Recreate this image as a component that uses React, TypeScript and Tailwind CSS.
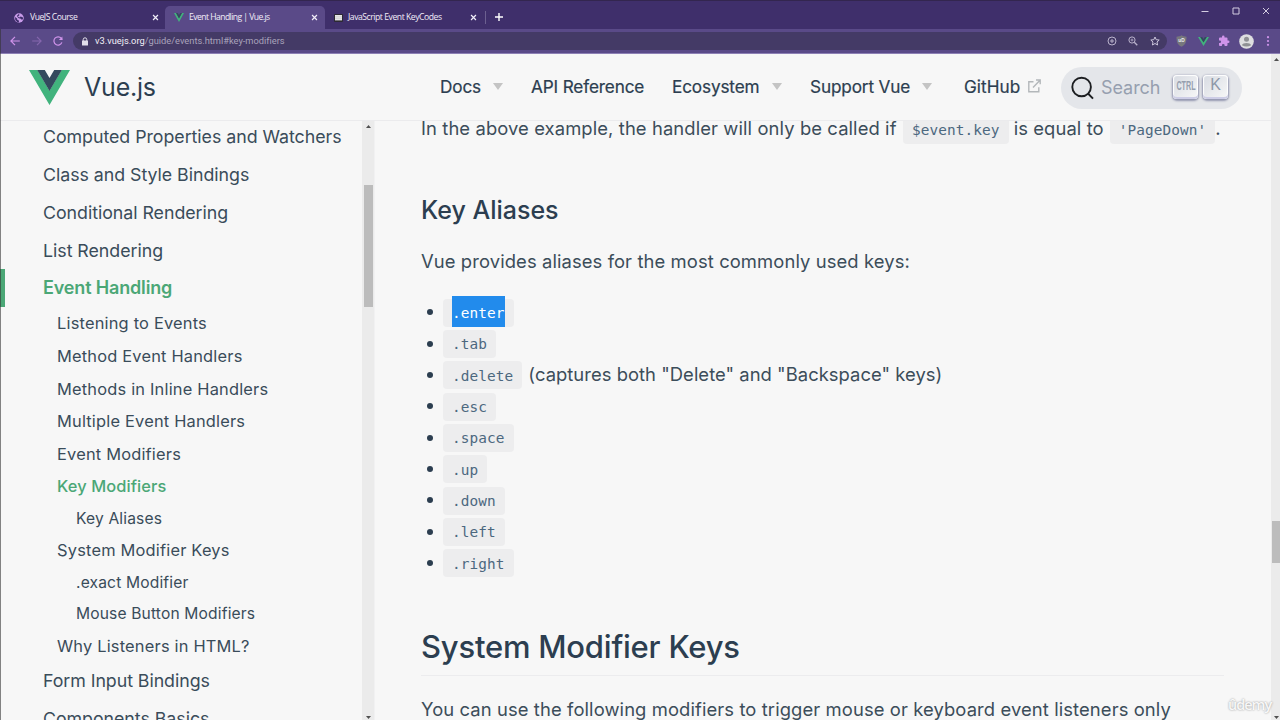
import React from "react";

const VueLogo = ({ className }: { className: string }) => (
  <svg viewBox="0 0 41 35" className={className} preserveAspectRatio="none">
    <path d="M0 0 L20.5 35 L41 0 H32.6 L20.5 20.8 L8.4 0 Z" fill="#41b37d" />
    <path d="M8.2 0 L20.5 21 L32.8 0 H25.2 L20.5 8 L15.8 0 Z" fill="#34495e" />
  </svg>
);

const Cross = () => (
  <svg viewBox="0 0 8 8" className="size-[7px]">
    <path d="M1.2 1.2 6.8 6.8 M6.8 1.2 1.2 6.8" stroke="#f1edf8" strokeWidth="1.4" />
  </svg>
);

const Globe = () => (
  <svg viewBox="0 0 16 16" className="size-[10px]">
    <circle cx="8" cy="8" r="7.6" fill="#c99bea" />
    <path d="M1.6 6.4 5 8.6l.2 2.2 2.6 1 .2 3.2-3-.8L2 11Z M8 1.2 8.6 3.6 6.2 5.4 8.4 7l2.4-1.6 3.6 1.8v2L12.8 11 11 9.2 7.6 8.2 5.6 6.2 4.8 4.4Z" fill="#3f2f6b" />
  </svg>
);

const NavItem = ({ label, arrow, className }: { label: string; arrow?: boolean; className: string }) => (
  <div className={`flex shrink-0 items-center whitespace-nowrap ${className}`}>
    <span>{label}</span>
    {arrow && (
      <svg viewBox="0 0 10 7" className="ml-auto h-[7px] w-[10px]">
        <path d="M0 0H10L5 7Z" fill="#c4c4c4" />
      </svg>
    )}
  </div>
);

const Header = () => (
  <header className="flex h-[67px] shrink-0 items-center border-b border-[#ebebed] pl-[29px]">
    <VueLogo className="h-[35px] w-[41px] shrink-0" />
    <span className="ml-[14px] w-[357px] text-[25px] leading-none tracking-[-0.2px] text-[#2c3e50]">Vue.js</span>
    <nav className="flex items-center text-[17.2px] leading-none tracking-[-0.15px] text-[#2c3e50] [-webkit-text-stroke:0.2px_#2c3e50]">
      <NavItem label="Docs" arrow className="-ml-px w-[63px]" />
      <NavItem label="API Reference" className="ml-7 w-[113px]" />
      <NavItem label="Ecosystem" arrow className="ml-7 w-[110px]" />
      <NavItem label="Support Vue" arrow className="ml-7 w-[122px]" />
      <div className="ml-8 flex w-[97px] shrink-0 items-center">
        <span className="w-[57px] tracking-[0.05px]">GitHub</span>
        <svg viewBox="0 0 13 14" className="mb-px ml-[7px] h-[14px] w-[13px]" fill="none" stroke="#b3b7ba" strokeWidth="1.4">
          <path d="M5.5 2.8H.8V12.8H10.8V8.2 M8 1H12.2V5.2 M12 1.2 5 8.4" />
        </svg>
      </div>
    </nav>
    <div className="mt-px flex h-[42px] w-[181px] shrink-0 items-center rounded-full bg-[#e4e6ea] pl-[10px]">
      <svg viewBox="0 0 24 24" className="size-6 shrink-0" fill="none" stroke="#1c1e21" strokeWidth="1.9">
        <circle cx="10.6" cy="11" r="9.3" />
        <path d="M17 17.5 22 22.6" />
      </svg>
      <span className="ml-[6px] w-[72px] text-[18px] leading-none tracking-[-0.05px] text-[#969faf]">Search</span>
      <kbd className="mb-[2px] flex h-[24px] w-[25px] items-center justify-center rounded-[4px] bg-gradient-to-br from-[#d7dbe2] to-[#f8f8f8] pb-[2px] shadow-[inset_0_-2px_0_0_#cdcde6,inset_0_0_1px_1px_#fff,0_1px_2px_1px_rgba(30,35,90,0.4)]">
        <span className="flex w-[18px] justify-center">
          <span className="scale-x-[0.6] font-['Liberation_Sans'] text-[12px] font-bold leading-none text-[#969faf]">CTRL</span>
        </span>
      </kbd>
      <kbd className="mb-[2px] ml-[5px] flex h-[24px] w-[25px] items-center justify-center rounded-[4px] bg-gradient-to-br from-[#d7dbe2] to-[#f8f8f8] pb-[3px] font-['Liberation_Sans'] text-[16px] leading-none text-[#8e98a8] shadow-[inset_0_-2px_0_0_#cdcde6,inset_0_0_1px_1px_#fff,0_1px_2px_1px_rgba(30,35,90,0.4)]">
        K
      </kbd>
    </div>
  </header>
);

const TabStrip = () => (
  <div className="flex h-[29px] shrink-0 items-end border-t border-[#33264f] bg-[#3f2f6b] font-['Open_Sans'] text-[8.6px] text-[#f1edf8]">
    <div className="flex h-[23px] w-[165px] items-center pl-[14px] pr-[6px]">
      <Globe />
      <span className="ml-[6px] flex-1 tracking-[-0.45px]">VueJS Course</span>
      <Cross />
    </div>
    <div className="flex h-[23px] w-[160px] items-center rounded-t-[5px] bg-[#5a4a88] pl-[9px] pr-[7px]">
      <VueLogo className="h-[9px] w-[10px]" />
      <span className="ml-[5px] flex-1 whitespace-nowrap tracking-[-0.55px]">Event Handling | Vue.js</span>
      <Cross />
    </div>
    <div className="flex h-[23px] w-[160px] items-center pl-[9px] pr-2">
      <svg viewBox="0 0 9 8" className="h-2 w-[9px]">
        <rect width="9" height="8" rx="1" fill="#2d2a33" />
        <rect x="1" y="1" width="7" height="5.4" fill="#e6e6e6" />
        <path d="M1 2.7H8 M1 4.4H8" stroke="#c4c4c4" strokeWidth=".5" />
      </svg>
      <span className="ml-[5px] flex-1 whitespace-nowrap tracking-[-0.45px]">JavaScript Event KeyCodes</span>
      <Cross />
    </div>
    <div className="mb-[5px] h-[13px] w-px bg-[#6c6090]" />
    <svg viewBox="0 0 8 8" className="mb-[8px] ml-[9px] size-2">
      <path d="M4 0V8 M0 4H8" stroke="#fff" strokeWidth="1.4" />
    </svg>
    <div className="mb-[14px] ml-auto flex w-[79px] items-center justify-between pr-[10px]">
      <svg viewBox="0 0 8 8" className="size-2"><path d="M0.5 4.5H7.5" stroke="#d4cde2" /></svg>
      <svg viewBox="0 0 8 8" className="size-2"><path d="M1 1H7V7H1Z" fill="none" stroke="#d4cde2" /></svg>
      <svg viewBox="0 0 8 8" className="size-2"><path d="M1 1 7 7M7 1 1 7" stroke="#d4cde2" /></svg>
    </div>
  </div>
);

const Toolbar = () => (
  <div className="flex h-[25px] shrink-0 items-center border-b border-[#8d80b5] bg-[#5a4a88] pl-[10px]">
    <svg viewBox="0 0 10 10" className="size-[10px]" fill="none" stroke="#cf93ea" strokeWidth="1.2">
      <path d="M9.8 5H1 M5 .8.9 5 5 9.2" />
    </svg>
    <svg viewBox="0 0 10 10" className="ml-3 size-[10px]" fill="none" stroke="#8566ad" strokeWidth="1.2">
      <path d="M.2 5H9 M5 .8 9.1 5 5 9.2" />
    </svg>
    <svg viewBox="0 0 10 10" className="ml-[11px] size-[10px]" fill="none" stroke="#cf93ea" strokeWidth="1.2">
      <path d="M8.9 6.4A4.1 4.1 0 1 1 8.3 2.4L9.3 3.6" />
      <path d="M9.4.4V4H5.8Z" fill="#cf93ea" stroke="none" />
    </svg>
    <div className="ml-[10px] flex h-[18px] w-[1094px] items-center rounded-full bg-[#443a66] pl-2">
      <svg viewBox="0 0 8 9" className="h-[9px] w-2">
        <path d="M2.2 4V2.6a1.8 1.8 0 0 1 3.6 0V4" fill="none" stroke="#e2dfea" strokeWidth="1" />
        <rect x="1" y="3.5" width="6" height="5" rx=".6" fill="#e2dfea" />
      </svg>
      <span className="ml-[6px] flex-1 whitespace-nowrap font-['Roboto'] text-[9.3px] leading-none tracking-[-0.01px] text-[#a9a3bb]">
        <span className="text-[#f2f0f6]">v3.vuejs.org</span>/guide/events.html#key-modifiers
      </span>
      <svg viewBox="0 0 10 10" className="size-[10px]" fill="none" stroke="#b9b2cb">
        <circle cx="5" cy="5" r="4" />
        <path d="M5 3V7M3 5H7" />
      </svg>
      <svg viewBox="0 0 10 10" className="ml-[11px] size-[10px]" fill="none" stroke="#b9b2cb">
        <circle cx="4" cy="4" r="3.1" />
        <path d="M6.3 6.3 9.3 9.3" strokeWidth="1.3" />
        <path d="M4 2.6V5.4M2.6 4H5.4" strokeWidth=".8" />
      </svg>
      <svg viewBox="0 0 10 10" className="ml-[12px] mr-[7px] size-[10px]" fill="none" stroke="#cbc5da">
        <path d="M5 1 6.2 3.7 9.2 4 7 6 7.6 9 5 7.5 2.4 9 3 6 .8 4 3.8 3.7Z" />
      </svg>
    </div>
    <svg viewBox="0 0 11 12" className="ml-[9px] h-3 w-[11px]">
      <path d="M5.5.3C7 1.3 8.8 1.6 10.5 1.7 10.6 6.6 9.6 9.8 5.5 11.8 1.4 9.8.4 6.6.5 1.7 2.2 1.6 4 1.3 5.5.3Z" fill="#77777d" />
      <text x="5.5" y="7.4" textAnchor="middle" fontSize="4.8" fontWeight="700" fontFamily="Liberation Sans" fill="#eee">uD</text>
    </svg>
    <VueLogo className="ml-[11px] h-[9px] w-[11px]" />
    <svg viewBox="0 0 24 24" className="ml-[9px] size-3" fill="#cf93ea">
      <path d="M20.5 11H19V7a2 2 0 0 0-2-2h-4V3.5a2.5 2.5 0 0 0-5 0V5H4a2 2 0 0 0-2 2v3.8h1.5a2.7 2.7 0 0 1 0 5.4H2V20a2 2 0 0 0 2 2h3.8v-1.5a2.7 2.7 0 0 1 5.4 0V22H17a2 2 0 0 0 2-2v-4h1.5a2.5 2.5 0 0 0 0-5Z" />
    </svg>
    <svg viewBox="0 0 15 15" className="ml-[9px] size-[15px]">
      <circle cx="7.5" cy="7.5" r="7.3" fill="#dedee0" />
      <circle cx="7.5" cy="5.3" r="2.5" fill="#8f9094" />
      <path d="M2.9 11.2C3.6 8.3 11.4 8.3 12.1 11.2Q7.5 13.6 2.9 11.2Z" fill="#8f9094" />
    </svg>
    <svg viewBox="0 0 4 12" className="ml-[12px] h-3 w-1" fill="#cf93ea">
      <circle cx="2" cy="2.2" r="1.1" /><circle cx="2" cy="6" r="1.1" /><circle cx="2" cy="9.8" r="1.1" />
    </svg>
  </div>
);

type Entry = { label: string; row: string };
const top = "h-[37.75px] pl-[43px] text-[17.8px] tracking-[-0.04px]";
const sub = "h-[32.65px] pl-[57px] text-[16.4px] tracking-[0.2px]";
const low = "h-[31.7px] pl-[57px] text-[16.4px] tracking-[0.2px]";
const deep = "h-[31.8px] pl-[76px] text-[15.6px] tracking-[0.15px]";

const entries: Entry[] = [
  { label: "Computed Properties and Watchers", row: top },
  { label: "Class and Style Bindings", row: top },
  { label: "Conditional Rendering", row: top },
  { label: "List Rendering", row: top },
  { label: "Event Handling", row: "h-[37.75px] border-l-[5px] border-[#4ba776] pl-[38px] text-[18px] font-semibold tracking-[-0.16px] text-[#4ba776]" },
  { label: "Listening to Events", row: sub },
  { label: "Method Event Handlers", row: sub },
  { label: "Methods in Inline Handlers", row: sub },
  { label: "Multiple Event Handlers", row: sub },
  { label: "Event Modifiers", row: sub },
  { label: "Key Modifiers", row: "h-[32.65px] pl-[57px] text-[16.4px] font-medium tracking-[0.1px] text-[#4ba776]" },
  { label: "Key Aliases", row: deep },
  { label: "System Modifier Keys", row: low },
  { label: ".exact Modifier", row: deep },
  { label: "Mouse Button Modifiers", row: deep },
  { label: "Why Listeners in HTML?", row: low },
  { label: "Form Input Bindings", row: "h-[38.5px] pl-[43px] text-[17.8px] tracking-[-0.06px]" },
  { label: "Components Basics", row: top },
];

const ArrowUp = () => (
  <svg viewBox="0 0 5 3" className="h-[3px] w-[5px]"><path d="M0 3 2.5 0 5 3Z" fill="#505050" /></svg>
);
const ArrowDown = () => (
  <svg viewBox="0 0 5 3" className="h-[3px] w-[5px]"><path d="M0 0 2.5 3 5 0Z" fill="#505050" /></svg>
);

const Sidebar = () => (
  <aside className="flex w-[375px] shrink-0 border-r border-[#f1f1f2]">
    <div className="w-[362px] overflow-hidden text-[#3a4c5a]">
      <div className="-mt-[2.6px] flex flex-col">
        {entries.map((e) => (
          <div key={e.label} className={`flex shrink-0 items-center whitespace-nowrap leading-none ${e.row}`}>{e.label}</div>
        ))}
      </div>
    </div>
    <div className="flex w-3 flex-col items-center bg-[#ebebeb] pl-px pt-1">
      <ArrowUp />
      <div className="mt-[57px] h-[122px] w-[9px] shrink-0 bg-[#bcbcbc]" />
      <div className="mb-px mt-auto flex"><ArrowDown /></div>
    </div>
  </aside>
);

const Code = ({ children, selected }: { children: string; selected?: boolean }) => (
  <code className="inline-flex h-[28px] items-center rounded-[4px] bg-[#ededee] px-[9px] font-['DejaVu_Sans_Mono'] text-[14.4px] leading-none text-[#4c687f]">
    {selected ? (
      <span className="-mt-[2px] flex h-[31px] items-center bg-[#228bec] pt-[3px] text-white">{children}</span>
    ) : (
      <span className="pt-px">{children}</span>
    )}
  </code>
);

const aliases = [".enter", ".tab", ".delete", ".esc", ".space", ".up", ".down", ".left", ".right"];

const Article = () => (
  <main className="flex min-w-0 flex-1 flex-col overflow-hidden pl-[46px] text-[18.4px] tracking-[0.1px] text-[#3c4d5a]">
    <div className="-mt-[5px] flex h-[28px] shrink-0 items-center whitespace-nowrap leading-none">
      <span className="w-[482px] pb-[3px]">In the above example, the handler will only be called if</span>
      <Code>$event.key</Code>
      <span className="ml-[5px] w-[96px] pb-[3px]">is equal to</span>
      <Code>'PageDown'</Code>
      <span className="pb-[3px]">.</span>
    </div>
    <h3 className="mt-[52px] h-[28px] shrink-0 text-[25px] font-medium leading-[28px] tracking-[0px] text-[#2c3e50]">Key Aliases</h3>
    <p className="mt-[23px] h-[28px] shrink-0 leading-[28px]">Vue provides aliases for the most commonly used keys:</p>
    <ul className="mt-[22px] flex shrink-0 flex-col">
      {aliases.map((a, i) => (
        <li key={a} className="flex h-[31.35px] items-center">
          <span className="mb-px ml-[6px] mr-[10px] size-[6px] rounded-full bg-[#2c3e50]" />
          <Code selected={i === 0}>{a}</Code>
          {a === ".delete" && (
            <span className="ml-[6px] whitespace-nowrap pb-[3px] leading-none tracking-[0.04px]">(captures both "Delete" and "Backspace" keys)</span>
          )}
        </li>
      ))}
    </ul>
    <h2 className="mt-[46px] h-[51px] w-[803px] shrink-0 border-b border-[#ececee] text-[31px] font-medium leading-[44px] tracking-[-0.22px] text-[#2c3e50]">
      System Modifier Keys
    </h2>
    <p className="mt-[19px] shrink-0 whitespace-nowrap leading-[28px]">You can use the following modifiers to trigger mouse or keyboard event listeners only</p>
  </main>
);

export default function App() {
  return (
    <div className="relative flex h-[720px] w-[1280px] flex-col overflow-hidden bg-[#f7f7f7] font-['Inter',sans-serif]">
      <TabStrip />
      <Toolbar />
      <div className="flex min-h-0 flex-1">
        <div className="flex min-w-0 flex-1 flex-col">
          <Header />
          <div className="flex min-h-0 flex-1">
            <Sidebar />
            <Article />
          </div>
        </div>
        <div className="flex w-[9px] shrink-0 flex-col items-end bg-[#ebebeb] pt-1">
          <div className="mr-[1px] flex"><ArrowUp /></div>
          <div className="mt-[460px] h-[42px] w-2 shrink-0 bg-[#bcbcbc]" />
          <div className="mb-px mr-px mt-auto flex"><ArrowDown /></div>
        </div>
      </div>
      <div className="absolute bottom-0 left-0 top-[29px] w-px bg-[#333]/60" />
      <div className="absolute bottom-[5px] left-[1228px] font-['Open_Sans'] text-[14.5px] font-semibold leading-[20px] tracking-[-1px] text-white/90 [text-shadow:0_0_2px_#888]">
        ûdemy
      </div>
    </div>
  );
}
